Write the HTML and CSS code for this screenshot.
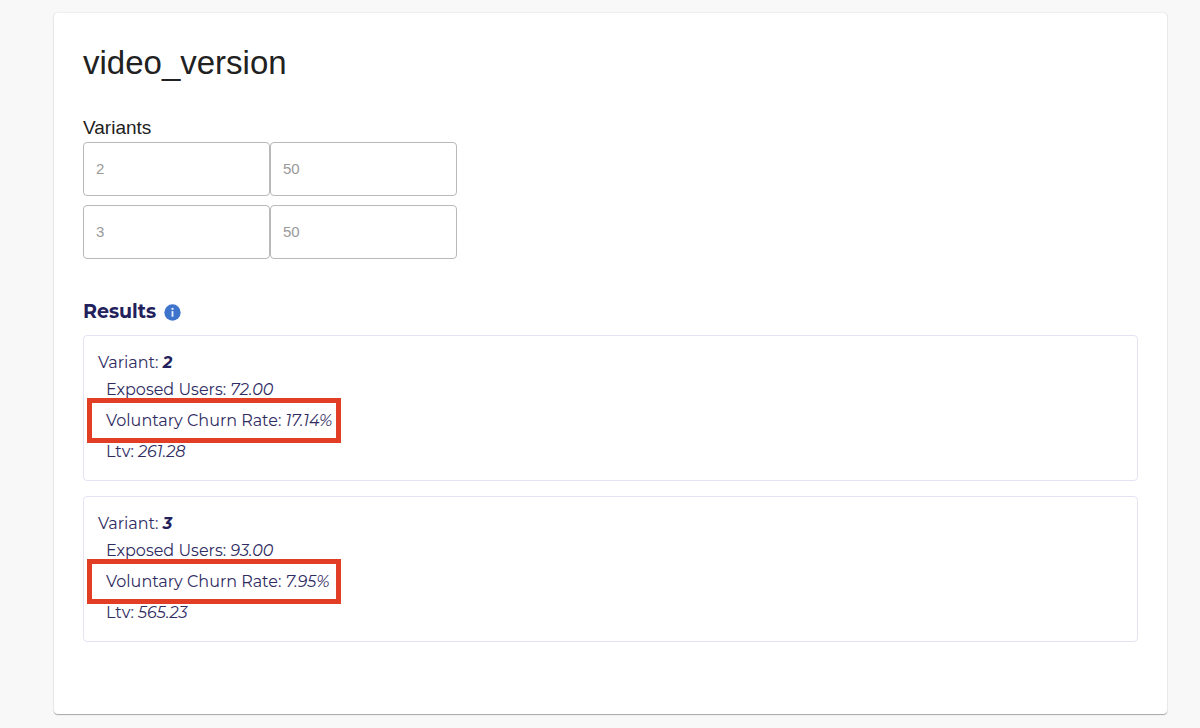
FILE: index.html
```html
<!DOCTYPE html>
<html lang="en">
<head>
  <meta charset="utf-8" />
  <meta name="viewport" content="width=device-width, initial-scale=1" />
  <title>video_version</title>
  <link rel="stylesheet" href="styles.css">
</head>
<body>
  <main class="card">
    <h1>video_version</h1>

    <fieldset class="variants">
      <legend>Variants</legend>
      <div class="variant-row">
        <input type="text" value="2" aria-label="Variant name" disabled>
        <input type="text" value="50" aria-label="Variant percentage" disabled>
      </div>
      <div class="variant-row">
        <input type="text" value="3" aria-label="Variant name" disabled>
        <input type="text" value="50" aria-label="Variant percentage" disabled>
      </div>
    </fieldset>

    <section class="results">
      <h2>
        Results
        <svg class="info-icon" viewBox="0 0 24 24" aria-hidden="true">
          <circle cx="12" cy="12" r="11.5" fill="#3f74cc"/>
          <circle cx="12" cy="7" r="1.6" fill="#e6eefb"/>
          <rect x="10.7" y="10" width="2.6" height="8" fill="#e6eefb"/>
        </svg>
      </h2>

      <article class="result">
        <p class="result-name">Variant: <em>2</em></p>
        <ul class="metrics">
          <li>Exposed Users: <em>72.00</em></li>
          <li class="highlight">Voluntary Churn Rate: <em>17.14%</em></li>
          <li>Ltv: <em>261.28</em></li>
        </ul>
      </article>

      <article class="result">
        <p class="result-name">Variant: <em>3</em></p>
        <ul class="metrics">
          <li>Exposed Users: <em>93.00</em></li>
          <li class="highlight">Voluntary Churn Rate: <em>7.95%</em></li>
          <li>Ltv: <em>565.23</em></li>
        </ul>
      </article>
    </section>
  </main>
</body>
</html>
```

FILE: styles.css
```css
*,
*::after {
  box-sizing: border-box;
  margin: 0;
  padding: 0;
}

body {
  padding: 13px 33px 14px 54px;
  background: #f8f8f8;
  color: #212121;
  font-family: Helvetica, "Liberation Sans", Arial, sans-serif;
}

.card {
  padding: 30px 29px 72px;
  border-radius: 4px;
  background: #fff;
  box-shadow: 0 1px 1px rgba(0, 0, 0, .3), 0 0 2px rgba(0, 0, 0, .14);
}

h1 {
  margin-bottom: 33px;
  font-size: 33px;
  font-weight: 400;
  line-height: 40px;
}

.variants {
  display: flex;
  flex-direction: column;
  gap: 9px;
  border: none;

  legend {
    padding-bottom: 3px;
    font-size: 19px;
    line-height: 23px;
  }
}

.variant-row {
  display: flex;

  input {
    width: 187px;
    height: 54px;
    padding: 0 12px 1px;
    border: 1px solid #b9b9b9;
    border-radius: 4px;
    background: #fff;
    color: #9a9a9a;
    font: 15px Helvetica, "Liberation Sans", Arial, sans-serif;
  }
}

.results {
  display: flex;
  flex-direction: column;
  gap: 15px;
  margin-top: 41px;
  color: #2f2c62;
  font-family: Montserrat, Inter, sans-serif;

  h2 {
    display: flex;
    align-items: center;
    gap: 8px;
    margin-bottom: -4px;
    color: #23215c;
    font-size: 19px;
    font-weight: 700;
    line-height: 24px;
  }
}

.info-icon {
  width: 17px;
  height: 17px;
}

.result {
  padding: 15px 14px 13px;
  border: 1px solid #e4e3f5;
  border-radius: 4px;
  font-size: 16px;
}

.result-name {
  line-height: 23px;

  em {
    color: #23215c;
    font-weight: 700;
  }
}

.metrics {
  padding-left: 8px;
  list-style: none;

  li {
    line-height: 31px;
  }
}

.highlight {
  position: relative;

  &::after {
    content: "";
    position: absolute;
    top: -7px;
    left: -19px;
    width: 254px;
    height: 45px;
    border: 5px solid #e23e25;
  }
}
```
